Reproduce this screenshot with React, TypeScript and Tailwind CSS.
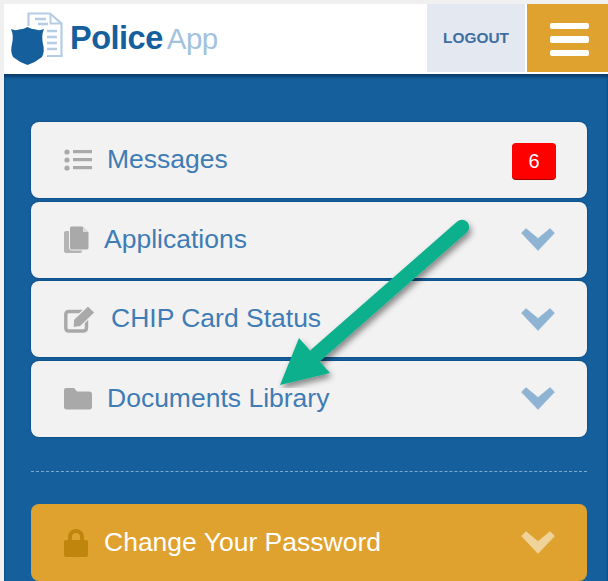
import React from "react";

const Chevron = ({ color = "#8fb4d3" }: { color?: string }) => (
  <svg width="34" height="23" viewBox="0 0 34 23" className="mr-[1px] shrink-0">
    <path d="M0.5 5 L5 0.6 L17 10.5 L29 0.6 L33.5 5 L17 22.5 Z" fill={color} stroke={color} strokeWidth="0.6" strokeLinejoin="round" />
  </svg>
);

const ListIcon = () => (
  <svg width="28" height="22" viewBox="0 0 28 22" fill="#a9a9a9">
    <circle cx="3" cy="3" r="2.6" />
    <circle cx="3" cy="11" r="2.6" />
    <circle cx="3" cy="19" r="2.6" />
    <rect x="9" y="1" width="19" height="3.2" />
    <rect x="9" y="9" width="19" height="3.2" />
    <rect x="9" y="17" width="19" height="3.2" />
  </svg>
);

const DocsIcon = () => (
  <svg width="25" height="28" viewBox="0 0 25 28">
    <path d="M2 5 H16 Q18 5 18 7 V25 Q18 27 16 27 H2 Q0 27 0 25 V7 Q0 5 2 5 Z" fill="#b4b4b4" />
    <path d="M7.5 0 H18.5 L25 6.5 V22 Q25 24 23 24 H7.5 Q5.5 24 5.5 22 V2 Q5.5 0 7.5 0 Z" fill="#a9a9a9" stroke="#f2f2f2" strokeWidth="1" />
    <path d="M19 1 L24 6 H19 Z" fill="#dcdcdc" />
  </svg>
);

const EditIcon = () => (
  <svg width="32" height="28" viewBox="0 0 32 28">
    <path d="M18 6.5 H5 Q1.8 6.5 1.8 9.5 V23 Q1.8 26 5 26 H19 Q22.5 26 22.5 23 V15" fill="none" stroke="#a9a9a9" strokeWidth="3.4" />
    <path d="M9.5 14.5 L24 0.8 L31 7.5 L16.5 21.5 L9 22.5 Z" fill="#a9a9a9" stroke="#f2f2f2" strokeWidth="1.2" />
  </svg>
);

const FolderIcon = () => (
  <svg width="28" height="22" viewBox="0 0 28 22" fill="#a9a9a9">
    <path d="M2 0 H10 L13 3.5 H25 Q28 3.5 28 6 V19 Q28 21.5 25 21.5 H3 Q0 21.5 0 19 V2 Q0 0 2 0 Z" />
  </svg>
);

const LockIcon = () => (
  <svg width="24" height="29" viewBox="0 0 24 29">
    <path d="M6 14 V9 a6 6 0 0 1 12 0 V14" fill="none" stroke="#bf850c" strokeWidth="4" />
    <rect x="0" y="12" width="24" height="17" rx="2" fill="#bf850c" />
  </svg>
);

const Logo = () => (
  <svg width="54" height="54" viewBox="0 0 54 54" className="shrink-0">
    <path d="M18.5 15 V2.5 H40 L51.5 12.5 V45 H37" fill="none" stroke="#b5cde4" strokeWidth="2.2" />
    <path d="M40.5 3 V12.5 H51" fill="none" stroke="#b5cde4" strokeWidth="2" />
    <path d="M25 8 H36 M28 13 H38 M37 20 H47 M37 26 H47 M37 32 H47 M37 38 H47" stroke="#b5cde4" strokeWidth="2.4" fill="none" />
    <path d="M1 18 Q5 20 9 18.5 Q14 18 17.5 16 Q21 18 26 18.5 Q30 20 34 18 Q31 25 33 33 Q35 40 32 46 Q26 51 17.5 54 Q9 51 3 46 Q0 40 2 33 Q4 25 1 18 Z" fill="#15609c" />
  </svg>
);

const Card = ({
  icon,
  label,
  right,
}: {
  icon: React.ReactNode;
  label: string;
  right: React.ReactNode;
}) => (
  <div className="flex h-[76px] items-center rounded-lg bg-[#f2f2f2] pr-[31px] pl-[33px] shadow-[0_0_2px_rgba(0,45,105,0.9)]">
    <span className="mr-[15px] flex">{icon}</span>
    <span className="flex-1 text-[26.5px] text-[#3f7cb5]">{label}</span>
    {right}
  </div>
);

export default function App() {
  return (
    <div className="relative h-[581px] w-[608px] overflow-hidden bg-[#f0f0f0] pt-[4px] pl-[4px] font-['Liberation_Sans',Arial,sans-serif]">
      <header className="flex h-[70px] items-stretch border-b-2 border-white bg-white">
        <div className="flex flex-1 items-center pl-[6px]">
          <Logo />
          <div className="ml-[6px] flex items-baseline leading-none">
            <span className="text-[32.5px] font-bold tracking-[-0.5px] text-[#15609c]">Police</span>
            <span className="ml-[4px] text-[29.5px] tracking-[-0.5px] text-[#a3c2de]">App</span>
          </div>
        </div>
        <div className="flex w-[98px] items-center justify-center bg-[#e4e8f1] text-[15.4px] font-bold text-[#3f6ea3]">
          LOGOUT
        </div>
        <div className="ml-[2px] flex w-[81px] flex-col items-center justify-center gap-[7px] bg-[#dfa22f] pt-[3px] pl-[4px]">
          <div className="h-[6.5px] w-[39px] rounded-[2px] bg-white" />
          <div className="h-[6.5px] w-[39px] rounded-[2px] bg-white" />
          <div className="h-[6.5px] w-[39px] rounded-[2px] bg-white" />
        </div>
      </header>
      <main className="h-[507px] bg-[#15609c] pt-[48px] pr-[21px] pl-[27px] shadow-[inset_0_3px_3px_rgba(0,30,70,0.55)]">
        <div className="flex flex-col gap-[3.67px]">
          <Card
            icon={<ListIcon />}
            label="Messages"
            right={
              <div className="mt-[1px] flex h-[36px] w-[44px] items-center justify-center rounded-[4px] bg-[#fe0000] text-[20px] text-white shadow-[0_1px_0_#a00000]">
                6
              </div>
            }
          />
          <Card icon={<DocsIcon />} label="Applications" right={<Chevron />} />
          <Card icon={<EditIcon />} label="CHIP Card Status" right={<Chevron />} />
          <Card icon={<FolderIcon />} label="Documents Library" right={<Chevron />} />
        </div>
        <div className="mt-[34px] mb-[32px] border-t border-dashed border-[#7fa9cc]" />
        <div className="flex h-[77px] items-center rounded-lg bg-[#dfa22f] pr-[31px] pl-[33px]">
          <span className="mr-[16px] flex"><LockIcon /></span>
          <span className="flex-1 text-[26.5px] text-white">Change Your Password</span>
          <Chevron color="#efd399" />
        </div>
      </main>
      <svg className="absolute top-[218px] left-[278px]" width="200" height="170" viewBox="0 0 200 170">
        <defs>
          <filter id="s" x="-20%" y="-20%" width="150%" height="150%">
            <feDropShadow dx="2" dy="4" stdDeviation="3" floodColor="#000" floodOpacity="0.45" />
          </filter>
        </defs>
        <g filter="url(#s)">
          <path d="M184 9 L38 137" stroke="#0bb08c" strokeWidth="14.5" strokeLinecap="round" fill="none" />
          <path d="M2 167 L21 120 L52 155 Z" fill="#0bb08c" />
        </g>
      </svg>
    </div>
  );
}
